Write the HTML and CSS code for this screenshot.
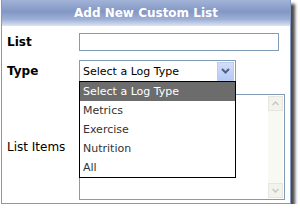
FILE: index.html
```html
<!DOCTYPE html>
<html lang="en">
<head>
    <meta charset="UTF-8">
    <title>Add New Custom List</title>
    <link rel="stylesheet" href="styles.css">
</head>
<body>
    <div class="painel">
        <div class="cabecalho">Add New Custom List</div>
        <div class="corpo">
            <div class="linha linha-lista">
                <label class="rotulo forte">List</label>
                <div class="campo"></div>
            </div>
            <div class="linha linha-tipo">
                <label class="rotulo forte">Type</label>
                <div class="combo">
                    <span class="combo-texto">Select a Log Type</span>
                    <span class="combo-botao">
                        <svg width="9" height="6" viewBox="0 0 9 6"><path d="M1 1 L4.5 4.5 L8 1" fill="none" stroke="#4d6185" stroke-width="2"/></svg>
                    </span>
                    <!-- lista aberta do select -->
                    <ul class="opcoes">
                        <li class="opcao ativa">Select a Log Type</li>
                        <li class="opcao">Metrics</li>
                        <li class="opcao">Exercise</li>
                        <li class="opcao">Nutrition</li>
                        <li class="opcao">All</li>
                    </ul>
                </div>
            </div>
            <div class="linha linha-itens">
                <label class="rotulo">List Items</label>
                <div class="area">
                    <div class="rolagem">
                        <span class="seta-rol">
                            <svg width="7" height="5" viewBox="0 0 7 5"><path d="M0.5 4 L3.5 1 L6.5 4" fill="none" stroke="#c9c9c0" stroke-width="1.5"/></svg>
                        </span>
                        <span class="seta-rol">
                            <svg width="7" height="5" viewBox="0 0 7 5"><path d="M0.5 1 L3.5 4 L6.5 1" fill="none" stroke="#c9c9c0" stroke-width="1.5"/></svg>
                        </span>
                    </div>
                </div>
            </div>
        </div>
    </div>
</body>
</html>
```

FILE: styles.css
```css
body {
    margin: 0;
    background-color: #ffffff;
    font-family: "DejaVu Sans", Verdana, sans-serif;
}

.painel {
    margin-left: 1px;
    width: 288px;
    border: 1px solid #8598bd;
    border-top: none;
    box-shadow: 4px 4px 3px #4a4a4a;
    background-color: #ffffff;
}

.cabecalho {
    height: 26px;
    line-height: 26px;
    text-align: center;
    color: #ffffff;
    font-size: 12px;
    font-weight: bold;
    background: linear-gradient(#a2b3d6 0%, #8297c4 45%, #9eb0d6 75%, #dde4f2 100%);
}

.corpo {
    padding: 7px 5px 3px 5px;
    display: flex;
    flex-direction: column;
}

.linha {
    display: flex;
    align-items: center;
}

.linha-tipo {
    margin-top: 9px;
}

.linha-itens {
    margin-top: 12px;
}

.rotulo {
    width: 72px;
    font-size: 12px;
    color: #000000;
}

.forte {
    font-weight: bold;
}

.campo {
    width: 198px;
    height: 16px;
    border: 1px solid #7f9db9;
}

.combo {
    position: relative;
    width: 155px;
    height: 20px;
    border: 1px solid #7f9db9;
    display: flex;
    align-items: center;
    justify-content: space-between;
}

.combo-texto {
    padding-left: 3px;
    font-size: 11px;
}

.combo-botao {
    width: 17px;
    height: 19px;
    margin-right: 1px;
    box-sizing: border-box;
    border: 1px solid #bccbf0;
    background: linear-gradient(#d2ddfa, #b7c9f5);
    display: flex;
    align-items: center;
    justify-content: center;
}

.opcoes {
    position: absolute;
    top: 20px;
    left: -1px;
    width: 155px;
    margin: 0;
    padding: 0;
    list-style: none;
    border: 1px solid #000000;
    background-color: #ffffff;
    z-index: 1;
}

.opcao {
    height: 19px;
    line-height: 19px;
    padding-left: 3px;
    font-size: 11px;
    color: #333333;
}

.opcao.ativa {
    background-color: #6c6c6c;
    color: #ffffff;
}

.area {
    width: 204px;
    height: 104px;
    border: 1px solid #7f9db9;
    display: flex;
    justify-content: flex-end;
}

.rolagem {
    width: 15px;
    margin: 1px 1px 1px 0;
    background-color: #f9f9f4;
    display: flex;
    flex-direction: column;
    justify-content: space-between;
}

.seta-rol {
    height: 15px;
    box-sizing: border-box;
    border: 1px solid #e6e6de;
    background-color: #f3f3ee;
    display: flex;
    align-items: center;
    justify-content: center;
}
```
